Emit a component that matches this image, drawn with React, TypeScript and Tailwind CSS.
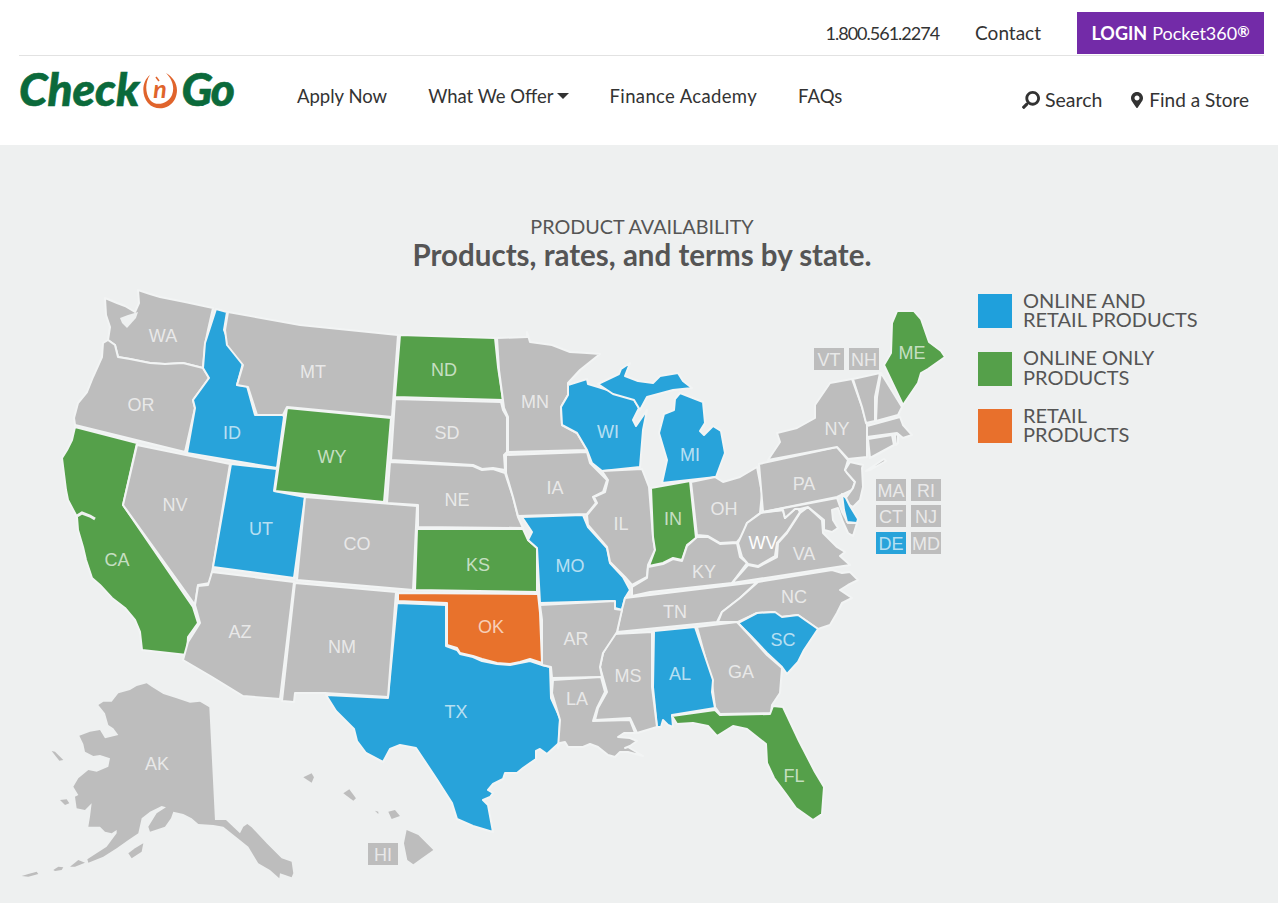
import { FaSearch, FaMapMarkerAlt } from "react-icons/fa";

const BLUE = "#28a3da";
const GREEN = "#55a04a";
const ORANGE = "#e8722c";
const GREY = "#bdbdbd";
const LINE = "#f2f4f4";
const BG = "#eef0f0";

const states: { fill: string; points: string }[] = [
  { fill: GREY, points: "138,290 150,294 160,297 185,302 213,308 208,330 205,345 203,368 183,363 165,364 150,363 130,359 118,357 115,345 108,340 110,327 106,315 105,298 117,303 125,306 135,312 139,303" },
  { fill: GREY, points: "103,343 108,340 115,345 118,357 130,359 150,363 165,364 183,363 203,368 209,378 193,400 195,408 185,452 75,425 74,418 78,403 87,392 93,377 102,357" },
  { fill: GREEN, points: "75,427 137,443 123,505 173,578 193,607 198,623 188,637 187,655 142,650 140,632 135,620 125,608 112,598 100,585 92,578 86,560 83,547 78,530 77,517 68,500 66,490 62,458 67,450 72,440" },
  { fill: GREY, points: "137,445 230,464 213,567 210,583 198,585 195,605 123,505" },
  { fill: BLUE, points: "231,464 277,469 274,491 305,497 294,578 213,567" },
  { fill: BLUE, points: "216,309 227,312 224,330 232,350 243,363 237,385 247,386 255,415 282,413 284,417 277,468 187,453 195,408 193,400 209,378 203,368 205,343" },
  { fill: GREY, points: "228,312 300,325 398,335 392,417 287,407 283,415 257,415 248,387 237,385 243,365 227,345 225,330" },
  { fill: GREEN, points: "287,408 391,418 384,502 275,491" },
  { fill: GREY, points: "305,497 417,506 413,590 297,580" },
  { fill: GREEN, points: "400,335 495,338 498,367 503,400 395,397" },
  { fill: GREY, points: "395,399 501,402 503,410 507,417 507,452 504,455 505,470 493,468 482,469 473,465 391,460" },
  { fill: GREY, points: "390,462 473,466 482,470 493,469 505,473 513,497 518,517 523,528 418,527 418,505 387,503" },
  { fill: GREEN, points: "417,529 523,529 528,540 537,548 537,592 415,590" },
  { fill: ORANGE, points: "398,593 538,594 540,613 542,663 530,659 520,662 510,664 497,663 482,659 473,656 460,653 457,648 447,645 447,603 398,601" },
  { fill: BLUE, points: "397,603 446,605 446,646 457,650 460,654 473,657 482,661 497,664 510,665 530,661 542,665 550,667 551,698 560,718 559,743 547,754 540,749 536,751 536,759 523,768 517,773 505,773 503,779 493,784 488,790 493,793 490,797 483,800 488,805 493,832 473,826 457,819 452,803 436,778 416,748 400,745 390,749 383,762 366,753 357,741 354,729 336,711 326,695 388,698" },
  { fill: GREY, points: "295,583 396,592 388,697 325,693 295,693 294,702 282,701" },
  { fill: GREY, points: "212,572 294,582 280,699 243,696 212,677 183,660 188,642 200,623 195,605 198,586 208,585" },
  { fill: GREY, points: "497,338 527,337 527,332 530,342 552,345 570,352 587,353 600,354 580,370 568,383 568,395 561,407 562,425 577,433 587,450 508,452 508,417 504,408 499,370" },
  { fill: GREY, points: "506,455 587,452 590,463 607,480 603,492 593,497 596,503 587,514 518,516 513,497 506,473" },
  { fill: BLUE, points: "522,517 583,515 588,527 607,548 610,563 623,577 630,590 625,598 622,610 615,608 613,601 540,603 537,548 528,540 532,532" },
  { fill: BLUE, points: "568,385 587,379 588,384 598,387 633,398 639,408 633,420 636,426 647,410 643,430 640,467 602,471 592,463 587,450 577,433 562,425 561,407 568,395" },
  { fill: BLUE, points: "598,384 619,374 621,369 630,363 625,376 638,381 653,383 660,376 678,373 683,381 692,388 673,390 647,397 640,410 634,400 613,394" },
  { fill: BLUE, points: "680,393 703,402 705,423 700,431 704,435 713,426 721,431 725,453 716,477 662,483 667,460 659,433 664,414 674,410 675,399" },
  { fill: GREY, points: "602,471 642,469 649,487 653,537 655,550 648,565 647,577 632,585 625,577 610,562 607,547 588,525 587,515 597,503 594,497 605,492 608,480" },
  { fill: GREEN, points: "651,488 690,481 696,538 687,545 682,560 673,558 663,563 649,566 655,550 653,537" },
  { fill: GREY, points: "691,482 715,477 723,482 740,477 757,467 762,493 760,513 747,523 743,535 737,542 720,543 708,536 697,535" },
  { fill: GREY, points: "697,537 708,537 720,544 737,543 740,557 747,563 732,583 650,592 632,596 632,587 647,578 648,567 663,564 673,559 682,561 687,546" },
  { fill: GREY, points: "650,595 757,582 740,598 722,612 717,622 617,632 620,617 625,598" },
  { fill: GREY, points: "748,565 758,567 777,557 778,543 787,533 800,513 808,507 822,520 823,533 837,547 845,552 840,556 850,565 732,583" },
  { fill: GREY, points: "761,513 747,523 738,543 742,557 748,564 758,566 775,556 777,543 787,532 800,512 797,507 785,518 783,510" },
  { fill: GREY, points: "759,464 837,447 848,460 845,470 855,482 852,490 837,497 763,512" },
  { fill: GREY, points: "768,460 780,442 777,433 797,428 815,418 815,405 830,383 852,379 862,407 867,425 867,457 848,459 837,447" },
  { fill: GREY, points: "866,471 884,459 886,461 870,470" },
  { fill: GREY, points: "853,379 880,373 875,397 875,421 866,423 862,407" },
  { fill: GREY, points: "881,373 902,407 898,415 876,421 877,397" },
  { fill: GREEN, points: "897,311 914,311 921,319 929,342 941,351 945,357 928,369 921,373 918,383 903,405 884,365 891,353 892,323" },
  { fill: GREY, points: "867,426 900,417 903,425 912,435 903,438 897,433 867,437" },
  { fill: GREY, points: "868,439 892,435 894,445 870,458" },
  { fill: GREY, points: "895,435 898,434 898,443 896,445" },
  { fill: GREY, points: "850,462 863,465 862,468 863,487 860,500 853,507 843,502 853,488 855,482 847,473 845,470" },
  { fill: GREY, points: "763,512 837,498 842,512 848,523 857,523 853,536 848,533 843,522 838,508 832,510 833,520 838,528 832,532 824,530 824,520 808,507 800,509 795,509 785,518 783,510" },
  { fill: BLUE, points: "842,494 846,498 850,506 858,519 857,523 847,522 844,510" },
  { fill: GREY, points: "758,582 832,570 842,573 850,572 858,580 848,585 840,590 852,598 842,603 837,613 830,625 818,629 798,615 780,617 773,612 757,613 738,622 718,622 722,612 740,598" },
  { fill: BLUE, points: "738,623 757,613 775,612 782,617 798,615 818,629 804,650 798,662 787,674 782,667 767,653 750,635" },
  { fill: GREY, points: "697,627 737,622 750,636 767,655 782,668 780,693 772,705 771,713 720,714 715,707 712,683" },
  { fill: BLUE, points: "654,631 695,627 713,680 712,692 715,708 672,715 673,727 668,725 663,720 661,727 657,727 653,687" },
  { fill: GREEN, points: "672,716 715,710 720,715 770,714 773,706 783,707 799,741 815,772 824,787 822,814 813,820 796,808 786,794 774,778 767,763 766,744 747,729 733,726 717,736 708,726 693,723 677,724" },
  { fill: GREY, points: "614,634 652,632 652,687 657,727 637,733 630,718 595,720 598,708 607,692 600,667 603,653" },
  { fill: GREY, points: "540,605 615,601 615,609 622,610 617,632 603,653 600,667 602,677 552,678 551,667 542,665 542,620" },
  { fill: GREY, points: "553,680 601,677 605,692 597,708 593,721 630,720 635,733 624,733 618,737 630,738 637,741 630,746 625,748 628,747 643,756 628,752 620,752 615,757 608,755 598,747 590,744 583,747 568,747 565,742 560,743 558,748 560,720 552,693" },
];

// traced at 3x from the corner 10,670, so the group below scales them down
const alaska = [
  "410,40 425,50 460,72 500,85 540,98 570,95 598,112 615,450 648,450 690,490 700,470 712,462 725,472 770,520 815,565 845,575 850,610 845,622 810,610 808,625 780,600 745,580 715,530 690,510 640,470 610,465 565,462 545,445 520,432 490,425 483,445 465,470 420,485 415,470 440,430 468,412 455,408 420,425 395,445 385,490 355,510 320,535 280,560 235,578 232,568 290,530 320,490 320,480 305,490 285,485 270,470 235,470 240,440 245,400 225,420 200,415 195,380 205,375 190,350 205,325 235,300 260,305 295,290 300,265 270,255 250,258 225,245 220,222 208,197 240,185 270,180 285,205 325,195 310,175 295,165 285,130 265,105 280,95 305,95 325,70 360,60 380,48",
  "130,600 145,590 160,592 155,600 135,603",
  "180,590 205,570 225,578 195,590",
  "35,618 55,612 80,605 85,612 55,620",
  "355,550 375,535 400,520 395,545 365,565",
  "125,243 135,245 160,270 148,272",
  "150,390 170,388 178,400 165,405",
  "1190,480 1225,495 1270,540 1235,565 1210,583 1192,570 1182,520",
  "1135,425 1155,420 1170,438 1145,447",
  "1095,422 1105,425 1105,432",
  "1000,370 1018,358 1038,385 1030,392",
  "880,322 905,310 912,322 905,338",
];

const labels: [string, number, number][] = [
  ["WA", 163, 335], ["MT", 313, 371], ["OR", 141, 404], ["ID", 232, 432], ["WY", 332, 456],
  ["ND", 444, 369], ["SD", 447, 432], ["NE", 457, 499], ["MN", 535, 401], ["WI", 608, 431],
  ["IA", 555, 487], ["IL", 621, 523], ["MI", 690, 454], ["IN", 673, 518], ["OH", 724, 508],
  ["PA", 804, 483], ["NY", 837, 428], ["ME", 912, 352], ["NV", 175, 504], ["UT", 261, 528],
  ["CO", 357, 543], ["CA", 117, 559], ["KS", 478, 564], ["MO", 570, 565], ["KY", 704, 571],
  ["VA", 804, 553], ["TN", 675, 611], ["NC", 794, 596], ["AR", 576, 638], ["OK", 491, 626],
  ["SC", 783, 639], ["AZ", 240, 631], ["NM", 342, 646], ["TX", 456, 711], ["LA", 577, 698],
  ["MS", 628, 675], ["AL", 680, 673], ["GA", 741, 671], ["FL", 794, 775], ["AK", 157, 763],
];

const boxes: [string, number, number, string][] = [
  ["VT", 814, 348, GREY], ["NH", 849, 348, GREY], ["MA", 876, 479, GREY], ["RI", 911, 479, GREY],
  ["CT", 876, 505, GREY], ["NJ", 911, 505, GREY], ["DE", 876, 532, BLUE], ["MD", 911, 532, GREY],
  ["HI", 368, 843, GREY],
];

const legend = [
  { color: "bg-[#1fa0dc]", lines: ["ONLINE AND", "RETAIL PRODUCTS"] },
  { color: "bg-[#55a04a]", lines: ["ONLINE ONLY", "PRODUCTS"] },
  { color: "bg-[#e8702c]", lines: ["RETAIL", "PRODUCTS"] },
];

const UsMap = () => (
  <svg viewBox="0 280 960 623" className="w-[960px] h-[623px] shrink-0">
    <g transform="translate(10 670) scale(0.3333)">
      {alaska.map((pts) => (
        <polygon key={pts} points={pts} fill={GREY} />
      ))}
    </g>
    {states.map((s) => (
      <polygon key={s.points} points={s.points} fill={s.fill} stroke={LINE} strokeWidth={2} strokeLinejoin="round" />
    ))}
    {/* Puget Sound and San Francisco Bay */}
    <polygon points="138,312 136,318 127,328 122,323 120,318 128,315" fill={BG} />
    <polyline points="77,516 82,513 90,516 95,519" fill="none" stroke={BG} strokeWidth={3} />
    <g fontFamily="'Liberation Sans', sans-serif" fontSize={18} textAnchor="middle" fill="#fff">
      {labels.map(([name, x, y]) => (
        <text key={name} x={x} y={y + 6.5} fillOpacity={0.68}>{name}</text>
      ))}
      <text x={763} y={548.5}>WV</text>
      {boxes.map(([name, x, y, fill]) => (
        <g key={name}>
          <rect x={x} y={y} width={30} height={22} fill={fill} />
          <text x={x + 15} y={y + 17.5} fillOpacity={0.68}>{name}</text>
        </g>
      ))}
    </g>
  </svg>
);

const Logo = () => (
  <div className="flex items-center text-[#0b6a3b] italic font-black text-[46px] leading-none [-webkit-text-stroke:0.6px_#0b6a3b]">
    <span>Check</span>
    <svg viewBox="0 0 36 40" className="w-[36px] h-[40px] ml-[3px] mr-[3px] mt-[4px] [-webkit-text-stroke:0]">
      <path d="M8 4C0 10 -1 24 6 32C14 41 28 38 33 28C38 17 33 7 24 2C30 8 33 16 30 24C26 33 14 36 8 29C3 22 3 11 8 4Z" fill="#e0642c" />
      <path d="M14 6L17 10" stroke="#e0642c" strokeWidth={1.5} />
      <text x={18} y={27} textAnchor="middle" fontSize={25} fontWeight={700} fill="#e0642c" fontStyle="italic" fontFamily="Lato, sans-serif">n</text>
    </svg>
    <span className="tracking-[-1.5px]">Go</span>
  </div>
);

export default function App() {
  return (
    <div className="font-['Lato',sans-serif] text-[#333]">
      <header className="bg-white h-[145px] pl-[19px] pr-[14px]">
        <div className="flex items-center justify-end h-[56px] pt-[12px] pb-[1px] border-b border-[#e2e2e2] text-[18px]">
          <span className="tracking-[-1px]">1.800.561.2274</span>
          <span className="ml-[36px] text-[19px]">Contact</span>
          <a className="ml-[36px] flex items-center justify-center w-[187px] h-[42px] bg-[#732ba8] text-white">
            <span className="font-bold">LOGIN</span>
            <span className="ml-[5px]">Pocket360</span>
            <sup className="text-[15px] -mt-[5px] top-0 font-bold">®</sup>
          </a>
        </div>
        <div className="flex">
          <div className="mt-[10px] w-[278px]">
            <Logo />
          </div>
          <nav className="flex items-center gap-[41px] h-[82px] text-[18.5px]">
            <span>Apply Now</span>
            <span className="flex items-center">
              What We Offer
              <span className="ml-[3px] mb-[2px] border-x-[6px] border-t-[6px] border-x-transparent border-t-[#333]" />
            </span>
            <span className="tracking-[0.35px]">Finance Academy</span>
            <span>FAQs</span>
          </nav>
          <div className="ml-auto flex items-center gap-[29px] h-[88px] pr-[15px] text-[19.5px]">
            <span className="flex items-center gap-[5px]">
              <FaSearch className="-scale-x-100 text-[18px]" />
              Search
            </span>
            <span className="flex items-center gap-[6px] text-[19px]">
              <FaMapMarkerAlt className="w-[12px] h-[18px]" />
              Find a Store
            </span>
          </div>
        </div>
      </header>

      <main className="bg-[#eef0f0] h-[758px] overflow-hidden pt-[69px] text-[#555]">
        <div className="text-center ml-[6px] h-[66px]">
          <p className="text-[19.8px] leading-[24px]">PRODUCT AVAILABILITY</p>
          <h1 className="text-[29.5px] leading-[34px] font-bold">Products, rates, and terms by state.</h1>
        </div>
        <div className="flex">
          <UsMap />
          <ul className="ml-[18px] mt-[14px] flex flex-col gap-[23.5px]">
            {legend.map((item) => (
              <li key={item.lines[0]} className="flex items-center gap-[11px] h-[34px]">
                <span className={`w-[34px] h-[34px] ${item.color}`} />
                <span className="text-[20px] leading-[19.5px] -mt-[2px]">
                  {item.lines[0]}
                  <br />
                  {item.lines[1]}
                </span>
              </li>
            ))}
          </ul>
        </div>
      </main>
    </div>
  );
}
